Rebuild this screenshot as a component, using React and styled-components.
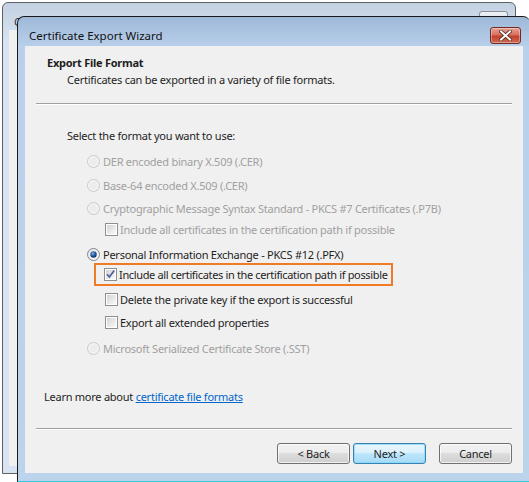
import React from "react";
import styled, { createGlobalStyle } from "styled-components";

const GlobalStyle = createGlobalStyle`
  body {
    margin: 0;
    background: #ffffff;
    font-family: "Noto Sans", "Open Sans", sans-serif;
    font-size: 11px;
    letter-spacing: -0.25px;
    color: #1e1e1e;
  }
  svg {
    flex-shrink: 0;
  }
`;

const Desktop = styled.div`
  position: relative;
  width: 529px;
  height: 482px;
  overflow: hidden;
  background: #ffffff;
`;

/* window behind the wizard */
const BackWindow = styled.div`
  position: absolute;
  left: 2px;
  top: 2px;
  width: 514px;
  height: 472px;
  border: 1px solid #5f6163;
  border-radius: 6px 6px 0 0;
  background: linear-gradient(#c3d1e2, #d8e4f2 40px);
  padding: 27px 6px 7px 6px;
  box-sizing: border-box;
  display: flex;
  flex-direction: column;
`;

const BackTitle = styled.div`
  position: absolute;
  left: 11px;
  top: 11px;
  color: #333;
`;

const BackButton = styled.div`
  position: absolute;
  left: 476px;
  top: 8px;
  width: 29px;
  height: 16px;
  border: 1px solid #8a8f96;
  border-radius: 3px;
  background: linear-gradient(#eef2f7, #cfd8e3);
  box-sizing: border-box;
`;

const BackClient = styled.div`
  flex: 1;
  background: #f0f0f0;
`;

/* the wizard dialog */
const Dialog = styled.div`
  position: absolute;
  left: 17px;
  top: 16px;
  width: 513px;
  height: 466px;
  border: 1px solid #1b1b1b;
  border-right: none;
  border-bottom: 1px solid #35c6e3;
  border-radius: 7px 7px 0 0;
  background: linear-gradient(#9eb8d8, #b9d0ea 30px, #bcd3ec);
  box-sizing: border-box;
  display: flex;
  flex-direction: column;
`;

const TitleBar = styled.div`
  height: 29px;
  padding: 8px 9px 0 11px;
  box-sizing: border-box;
  display: flex;
  align-items: center;
  justify-content: space-between;
`;

const TitleText = styled.div`
  font-size: 11.5px;
  letter-spacing: 0;
  color: #111;
`;

const CloseButton = styled.div`
  width: 31px;
  height: 17px;
  border: 1px solid #6d2b22;
  border-radius: 3px;
  background: linear-gradient(#e8a293, #d6725f 45%, #c2412c 55%, #cf6a54);
  box-sizing: border-box;
  display: flex;
  align-items: center;
  justify-content: center;
  box-shadow: inset 0 0 0 1px rgba(255, 255, 255, 0.35);
`;

const Client = styled.div`
  height: 427px;
  margin: 0 7px 8px 7px;
  background: #f0f0f0;
  display: flex;
  flex-direction: column;
`;

const Header = styled.div`
  padding: 9px 0 0 22px;
  height: 57px;
  box-sizing: border-box;
`;

const HeaderTitle = styled.div`
  font-weight: bold;
  line-height: 16px;
`;

const HeaderSub = styled.div`
  line-height: 16px;
  margin: 1px 0 0 20px;
`;

const Separator = styled.div`
  margin: 0 11px;
  height: 0;
  border-top: 1px solid #a0a0a0;
  border-bottom: 1px solid #ffffff;
`;

const Body = styled.div`
  flex: 1;
  padding: 22px 0 0 42px;
  display: flex;
  flex-direction: column;
`;

const Row = styled.div`
  display: flex;
  align-items: center;
  height: 16px;
  white-space: nowrap;
  margin-top: ${(p) => p.$mt || 0}px;
  margin-left: ${(p) => p.$indent || 0}px;
  color: ${(p) => (p.$disabled ? "#a0a0a0" : "#1e1e1e")};
  gap: ${(p) => (p.$check ? 2 : 3)}px;
`;

const Highlight = styled.div`
  margin: ${(p) => p.$mt}px 0 0 27px;
  width: 299px;
  height: 23px;
  border: 2px solid #f07a26;
  box-sizing: border-box;
  padding-left: 8px;
  white-space: nowrap;
  letter-spacing: -0.35px;
  display: flex;
  align-items: center;
  gap: 2px;
`;

const LearnMore = styled.div`
  margin-top: auto;
  margin-left: -23px;
  margin-bottom: 23px;
  line-height: 16px;
`;

const Link = styled.a`
  color: #0066cc;
  text-decoration: underline;
`;

const Footer = styled.div`
  display: flex;
  justify-content: flex-end;
  padding: 13px 11px 9px 0;
`;

const Button = styled.div`
  width: 73px;
  height: 21px;
  margin-left: ${(p) => p.$ml || 0}px;
  border: 1px solid ${(p) => (p.$primary ? "#3c7fb1" : "#707070")};
  border-radius: 3px;
  box-sizing: border-box;
  display: flex;
  align-items: center;
  justify-content: center;
  background: ${(p) =>
    p.$primary
      ? "linear-gradient(#eaf6fd, #d9f0fc 50%, #bee6fd 50%, #a7d9f5)"
      : "linear-gradient(#f2f2f2, #ebebeb 50%, #dddddd 50%, #cfcfcf)"};
  box-shadow: inset 0 0 0 1px
    ${(p) => (p.$primary ? "rgba(120,220,250,0.7)" : "rgba(255,255,255,0.7)")};
  color: #1e1e1e;
`;

const Radio = ({ checked, disabled }) => (
  <svg width="13" height="13" viewBox="0 0 13 13">
    <defs>
      <linearGradient id="rg" x1="0" y1="0" x2="1" y2="1">
        <stop offset="0" stopColor="#e6e6e6" />
        <stop offset="1" stopColor="#fdfdfd" />
      </linearGradient>
      <radialGradient id="rdot" cx="0.4" cy="0.35" r="0.7">
        <stop offset="0" stopColor="#7fb0e6" />
        <stop offset="0.6" stopColor="#1d4f91" />
        <stop offset="1" stopColor="#0f2d5a" />
      </radialGradient>
    </defs>
    <circle
      cx="6.5"
      cy="6.5"
      r="6"
      fill={disabled ? "#f4f4f4" : "url(#rg)"}
      stroke={disabled ? "#c8c8c8" : "#7d8590"}
    />
    {disabled && <circle cx="6.5" cy="6.5" r="4" fill="#ececec" />}
    {checked && <circle cx="6.5" cy="6.5" r="3.2" fill="url(#rdot)" />}
  </svg>
);

const Checkbox = ({ checked }) => (
  <svg width="13" height="13" viewBox="0 0 13 13">
    <defs>
      <linearGradient id="cg" x1="0" y1="0" x2="1" y2="1">
        <stop offset="0" stopColor="#d4d4d4" />
        <stop offset="1" stopColor="#f9f9f9" />
      </linearGradient>
    </defs>
    <rect x="0.5" y="0.5" width="12" height="12" fill="#fff" stroke="#8e8f8f" />
    <rect x="2" y="2" width="9" height="9" fill="url(#cg)" />
    {checked && (
      <path
        d="M3 6.3 L5.4 9 L10.2 2.6"
        fill="none"
        stroke="#4a5c98"
        strokeWidth="1.7"
      />
    )}
  </svg>
);

const CloseGlyph = () => (
  <svg width="13" height="11" viewBox="0 0 13 11">
    <path
      d="M2 1.5 L11 9.5 M11 1.5 L2 9.5"
      stroke="#5b2a22"
      strokeWidth="3.6"
      strokeLinecap="square"
    />
    <path
      d="M2 1.5 L11 9.5 M11 1.5 L2 9.5"
      stroke="#ffffff"
      strokeWidth="2"
      strokeLinecap="square"
    />
  </svg>
);

export default function App() {
  return (
    <Desktop>
      <GlobalStyle />
      <BackWindow>
        <BackTitle>Certificate</BackTitle>
        <BackButton />
        <BackClient />
      </BackWindow>

      <Dialog>
        <TitleBar>
          <TitleText>Certificate Export Wizard</TitleText>
          <CloseButton>
            <CloseGlyph />
          </CloseButton>
        </TitleBar>
        <Client>
          <Header>
            <HeaderTitle>Export File Format</HeaderTitle>
            <HeaderSub>
              Certificates can be exported in a variety of file formats.
            </HeaderSub>
          </Header>
          <Separator />
          <Body>
            <Row>Select the format you want to use:</Row>
            <Row $mt={10} $indent={20} $disabled>
              <Radio disabled />
              DER encoded binary X.509 (.CER)
            </Row>
            <Row $mt={8} $indent={20} $disabled>
              <Radio disabled />
              Base-64 encoded X.509 (.CER)
            </Row>
            <Row $mt={7} $indent={20} $disabled>
              <Radio disabled />
              Cryptographic Message Syntax Standard - PKCS #7 Certificates (.P7B)
            </Row>
            <Row $mt={5} $indent={38} $disabled $check>
              <Checkbox />
              Include all certificates in the certification path if possible
            </Row>
            <Row $mt={9} $indent={20}>
              <Radio checked />
              Personal Information Exchange - PKCS #12 (.PFX)
            </Row>
            <Highlight $mt={1}>
              <Checkbox checked />
              Include all certificates in the certification path if possible
            </Highlight>
            <Row $mt={5} $indent={38} $check>
              <Checkbox />
              Delete the private key if the export is successful
            </Row>
            <Row $mt={7} $indent={38} $check>
              <Checkbox />
              Export all extended properties
            </Row>
            <Row $mt={10} $indent={20} $disabled>
              <Radio disabled />
              Microsoft Serialized Certificate Store (.SST)
            </Row>
            <LearnMore>
              Learn more about <Link>certificate file formats</Link>
            </LearnMore>
          </Body>
          <Separator />
          <Footer>
            <Button>&lt; Back</Button>
            <Button $primary $ml={3}>
              Next &gt;
            </Button>
            <Button $ml={13}>Cancel</Button>
          </Footer>
        </Client>
      </Dialog>
    </Desktop>
  );
}
